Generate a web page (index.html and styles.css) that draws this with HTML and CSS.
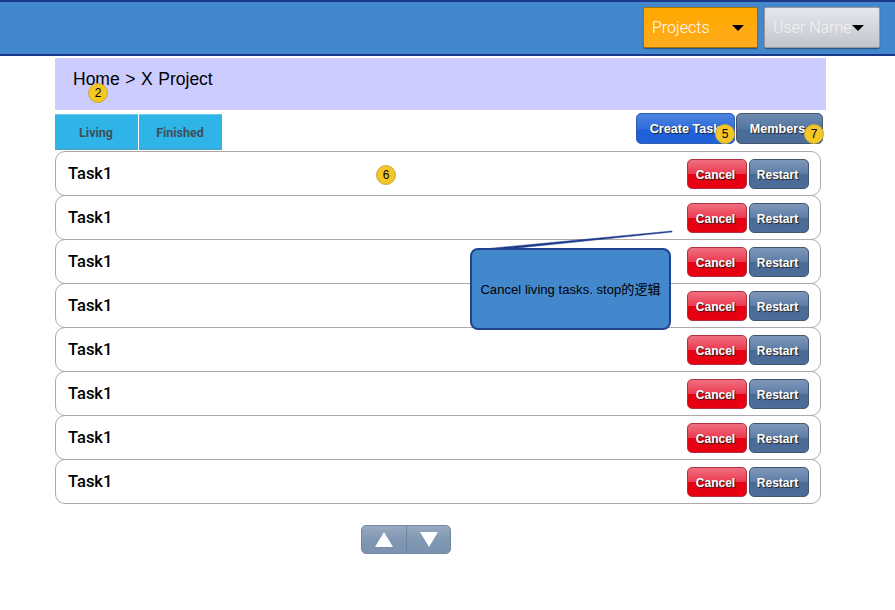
FILE: index.html
```html
<!DOCTYPE html>
<html lang="en">

<head>
    <meta charset="UTF-8">
    <title>X Project</title>
    <link rel="stylesheet" href="styles.css">
</head>

<body>
    <div class="header">
        <button class="drop projects">Projects<span class="caret"></span></button>
        <button class="drop user">User Name<span class="caret"></span></button>
    </div>

    <div class="main">
        <div class="crumb"><span class="crumb-text">Home &gt; X Project</span><span class="badge badge-2">2</span></div>

        <div class="toolbar">
            <div class="tabs">
                <div class="tab">Living</div>
                <div class="tab">Finished</div>
            </div>
            <div class="actions">
                <button class="btn create">Create Task<span class="badge badge-5">5</span></button>
                <button class="btn members">Members<span class="badge badge-7">7</span></button>
            </div>
        </div>

        <div class="tasks">
            <div class="task"><span class="name">Task1</span><span class="badge badge-6">6</span>
                <button class="btn cancel">Cancel</button><button class="btn restart">Restart</button></div>
            <div class="task"><span class="name">Task1</span>
                <button class="btn cancel">Cancel</button><button class="btn restart">Restart</button></div>
            <div class="task"><span class="name">Task1</span>
                <button class="btn cancel">Cancel</button><button class="btn restart">Restart</button></div>
            <div class="task"><span class="name">Task1</span>
                <button class="btn cancel">Cancel</button><button class="btn restart">Restart</button></div>
            <div class="task"><span class="name">Task1</span>
                <button class="btn cancel">Cancel</button><button class="btn restart">Restart</button></div>
            <div class="task"><span class="name">Task1</span>
                <button class="btn cancel">Cancel</button><button class="btn restart">Restart</button></div>
            <div class="task"><span class="name">Task1</span>
                <button class="btn cancel">Cancel</button><button class="btn restart">Restart</button></div>
            <div class="task"><span class="name">Task1</span>
                <button class="btn cancel">Cancel</button><button class="btn restart">Restart</button></div>
        </div>

        <div class="pager">
            <div class="page-btn"><span class="arrow-up"></span></div>
            <div class="page-btn"><span class="arrow-down"></span></div>
        </div>
    </div>

    <svg class="callout-tail" width="210" height="24" viewBox="0 0 210 24">
        <polygon points="6,20.5 200,2 200,3 31,20.5" fill="#1d3a8a" stroke="#1d3a8a" stroke-width="0.5" />
    </svg>
    <div class="callout">Cancel living tasks. stop的逻辑</div>
</body>

</html>
```

FILE: styles.css
```css
* {
    margin: 0px;
    box-sizing: border-box;
}

body {
    background: white;
    font-family: "Liberation Sans", "Noto Sans CJK SC", sans-serif;
    position: relative;
}

button {
    font-family: inherit;
    cursor: pointer;
}

.header {
    height: 56px;
    background: #4387cd;
    border-top: 2px solid #1d3a8a;
    border-bottom: 2px solid #1d3a8a;
    display: flex;
    align-items: flex-start;
    justify-content: flex-end;
    gap: 6px;
    padding: 5px 15px 0 0;
}

.drop {
    height: 41px;
    border: 1px solid #555;
    border-radius: 2px;
    font-family: Roboto, sans-serif;
    font-size: 16px;
    font-weight: 300;
    color: white;
    display: flex;
    align-items: center;
    text-align: left;
    padding: 0 0 0 8px;
    box-shadow: 0 1px 1px rgba(0, 0, 0, 0.4);
}

.projects {
    width: 115px;
    background: linear-gradient(#ffa800, #ffab1e);
    border-color: #a0700a;
}

.user {
    width: 116px;
    background: linear-gradient(#e4e7ef, #c2c5cb);
    border-color: #999;
    color: #f2f2f2;
}

.caret {
    width: 0;
    height: 0;
    border-left: 6px solid transparent;
    border-right: 6px solid transparent;
    border-top: 6px solid black;
}

.projects .caret {
    margin-left: 22px;
}

.user .caret {
    margin-left: 0;
}

.main {
    width: 771px;
    margin: 2px 0 0 55px;
}

.crumb {
    position: relative;
    height: 52px;
    background: #ccccff;
    padding: 11px 0 0 18px;
    font-size: 17.5px;
    word-spacing: 0.7px;
    color: black;
}

.toolbar {
    display: flex;
    justify-content: space-between;
    align-items: flex-start;
    height: 41px;
    padding-right: 3px;
}

.tabs {
    display: flex;
    gap: 1px;
    margin-top: 4px;
}

.tab {
    width: 83px;
    height: 36px;
    background: #2fb4e8;
    border-top: 1px solid #6fcbef;
    border-bottom: 2px solid #41a9cf;
    font-family: Roboto, sans-serif;
    font-size: 12.5px;
    font-weight: bold;
    color: #3f4f59;
    text-align: center;
    line-height: 36px;
    padding-right: 1px;
}

.actions {
    display: flex;
    gap: 1px;
    margin-top: 3px;
}

.btn {
    position: relative;
    border: 1px solid #44566e;
    border-radius: 5px;
    font-family: "Liberation Sans", sans-serif;
    font-size: 12px;
    font-weight: bold;
    color: white;
    text-shadow: 1px 1px 1px #222;
    padding: 0;
}

.create {
    width: 99px;
    height: 31px;
    background: linear-gradient(#4d84dd, #2f6ddd 50%, #1f5fd8 55%, #2062db);
    border-color: #2a5fae;
    font-size: 12.6px;
    padding-right: 1px;
}

.members {
    width: 87px;
    height: 31px;
    background: linear-gradient(#6d8bb0, #55769f 50%, #4a6b98 55%, #4c6d9a);
    font-size: 12.6px;
    padding-right: 4px;
}

.tasks {
    display: flex;
    flex-direction: column;
    width: 766px;
}

.task {
    position: relative;
    height: 45px;
    margin-bottom: -1px;
    background: white;
    border: 1px solid #aaaaaa;
    border-radius: 10px;
    display: flex;
    align-items: center;
    gap: 2px;
    padding: 0 11px 0 12px;
}

.name {
    font-family: Roboto, sans-serif;
    font-size: 16.5px;
    font-weight: 500;
    color: black;
    margin-right: auto;
}

.cancel,
.restart {
    width: 60px;
    height: 30px;
    margin-top: 1px;
    padding: 1px 3px 0 0;
}

.cancel {
    background: linear-gradient(#ef7080, #ea3c50 48%, #e60012 52%, #e60012);
    border-color: #b03040;
}

.restart {
    background: linear-gradient(#7d97ba, #5f7fa8 48%, #4a6b98 52%, #4c6d9a);
}

.pager {
    display: flex;
    width: 90px;
    height: 29px;
    margin: 22px 0 0 306px;
    background: linear-gradient(#9aaac0, #8097b3 50%, #7a92b0);
    border: 1px solid #7487a0;
    border-radius: 5px;
}

.page-btn {
    flex: 1;
    display: flex;
    align-items: center;
    justify-content: center;
}

.page-btn + .page-btn {
    border-left: 1px solid #6f84a0;
}

.arrow-up {
    border-left: 9px solid transparent;
    border-right: 9px solid transparent;
    border-bottom: 15px solid white;
}

.arrow-down {
    margin-left: 2px;
    border-left: 9px solid transparent;
    border-right: 9px solid transparent;
    border-top: 15px solid white;
}

.badge {
    position: absolute;
    width: 20px;
    height: 20px;
    border-radius: 50%;
    background: #f4c724;
    border: 1px solid #c9aa45;
    font-family: "Liberation Sans", sans-serif;
    font-size: 12px;
    font-weight: normal;
    color: black;
    text-shadow: none;
    text-align: center;
    line-height: 18px;
}

.badge-2 {
    left: 33px;
    top: 25px;
}

.badge-5 {
    left: 78px;
    top: 10px;
}

.badge-6 {
    left: 320px;
    top: 13px;
}

.badge-7 {
    left: 67px;
    top: 10px;
}

.callout {
    position: absolute;
    left: 470px;
    top: 248px;
    width: 201px;
    height: 82px;
    background: #4387cd;
    border: 2px solid #22418f;
    border-radius: 8px;
    font-size: 13px;
    letter-spacing: 0.06px;
    color: black;
    text-align: center;
    line-height: 80px;
    white-space: nowrap;
}

.callout-tail {
    position: absolute;
    left: 472px;
    top: 229px;
}
```
